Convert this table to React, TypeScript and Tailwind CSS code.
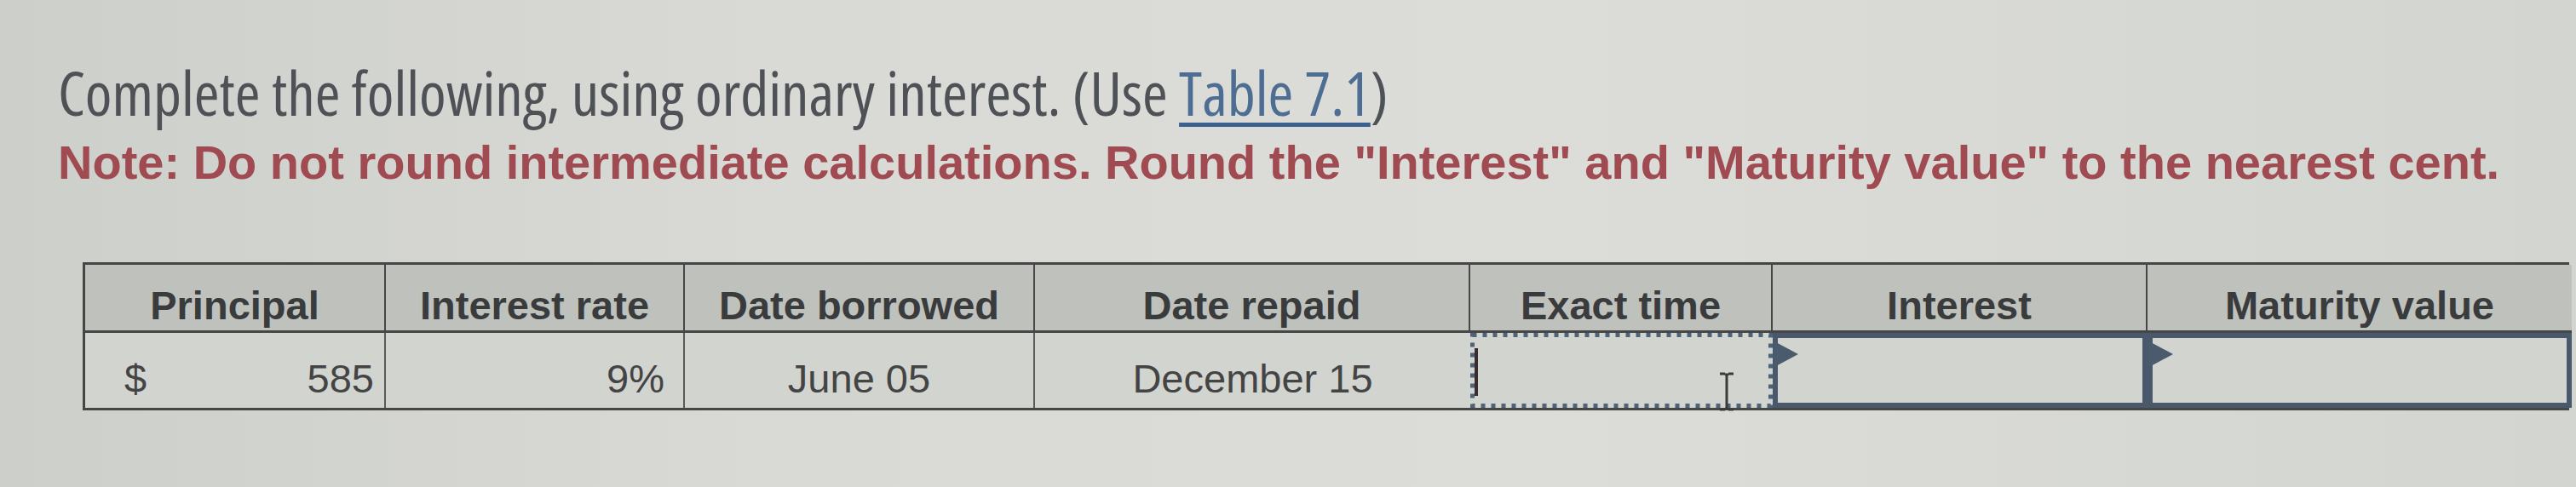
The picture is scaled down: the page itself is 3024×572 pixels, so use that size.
const cell = 'relative h-[88px] bg-[#d2d4cf]'

function Caret() {
  return <span className="absolute left-[5px] top-[18px] h-[56px] w-[4px] bg-[#3a2d31]" />
}

function IBeam() {
  return (
    <svg className="absolute left-[290px] top-[46px]" width="22" height="46" viewBox="0 0 22 46">
      <path d="M3 2h6M13 2h6M11 3v40M3 44h6M13 44h6M9 2l2 2l2-2M9 44l2-2l2 2" stroke="#3b3b3b" strokeWidth="3" fill="none" />
    </svg>
  )
}

function Marker() {
  return (
    <svg className="absolute -left-[4px] top-[4px]" width="30" height="30" viewBox="0 0 30 30">
      <path d="M0 0L28 15L0 30Z" fill="#4b5b6e" />
    </svg>
  )
}

// Ordinary interest worksheet row, as it sits in the assignment.
export default function App() {
  return (
    <div className="h-[572px] w-[3024px] overflow-hidden bg-[linear-gradient(90deg,#cdcfca_0%,#d9dad5_30%,#dcddd8_60%,#d3d5d0_100%)]">
      <div className="pl-[68px] pt-[68px]">
        <p className="font-['Open_Sans',sans-serif] text-[72px] leading-[80px] text-[#4e5156] font-stretch-condensed">
          Complete the following, using ordinary interest. (Use{' '}
          <span className="text-[#4d6d92] underline decoration-[#3d618f] decoration-[5px] underline-offset-[8px]">Table 7.1</span>)
        </p>
        <p className="mt-[15px] whitespace-nowrap font-['Liberation_Sans',Arial,sans-serif] text-[56px] font-bold leading-none text-[#a04a51]">
          Note: Do not round intermediate calculations. Round the "Interest" and "Maturity value" to the nearest cent.
        </p>
      </div>

      <div className="ml-[97px] mt-[89px] grid w-[2919px] grid-cols-[353px_351px_411px_511px_355px_440px_498px] border-[3px] border-[#464646] font-['Liberation_Sans',Arial,sans-serif]">
        {['Principal', 'Interest rate', 'Date borrowed', 'Date repaid', 'Exact time', 'Interest', 'Maturity value'].map((h, i) => (
          <div
            key={h}
            className={`h-[80px] border-b-[3px] border-[#464646] bg-[#bec1bc] pt-[24px] text-center text-[47px] font-bold leading-none text-[#3a3b3d] ${i < 6 ? 'border-r-2' : ''}`}
          >
            {h}
          </div>
        ))}

        <div className={`${cell} flex items-start justify-between border-r-2 border-[#5a5a5a] pl-[46px] pr-[12px] pt-[30px] text-[47px] leading-none text-[#444]`}>
          <span>$</span>
          <span>585</span>
        </div>
        <div className={`${cell} border-r-2 border-[#5a5a5a] pr-[22px] pt-[30px] text-right text-[47px] leading-none text-[#444]`}>9%</div>
        <div className={`${cell} border-r-2 border-[#5a5a5a] pt-[30px] text-center text-[47px] leading-none text-[#444]`}>June 05</div>
        <div className={`${cell} pt-[30px] text-center text-[47px] leading-none text-[#444]`}>December 15</div>
        <div className={cell}>
          <svg className="absolute inset-0" width="100%" height="100%">
            <rect x="2.5" y="2.5" width="350" height="83" fill="none" stroke="#4f6378" strokeWidth="5" strokeDasharray="5 7" />
          </svg>
          <Caret />
          <IBeam />
        </div>
        <div className={`${cell} border-[6px] border-[#4a586b]`}>
          <Marker />
        </div>
        <div className={`${cell} border-[6px] border-[#4a586b]`}>
          <Marker />
        </div>
      </div>
    </div>
  )
}
